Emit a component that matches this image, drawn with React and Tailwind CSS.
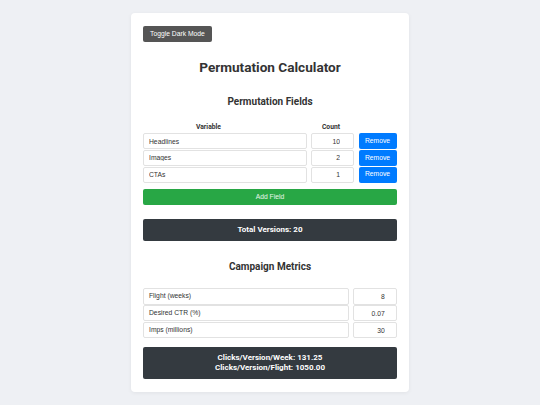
import React, { useState } from 'react';

const heading = { fontFamily: "Roboto, 'Liberation Sans', sans-serif" };
const body = { fontFamily: "'Liberation Sans', Arial, sans-serif" };

export default function App() {
  const [fields, setFields] = useState([
    { name: 'Headlines', count: 10 },
    { name: 'Images', count: 2 },
    { name: 'CTAs', count: 1 },
  ]);
  const [flight, setFlight] = useState(8);
  const [ctr, setCtr] = useState(0.07);
  const [imps, setImps] = useState(30);

  const total = fields.reduce((acc, f) => acc * (Number(f.count) || 1), 1);
  const perWeek = ((imps * 1000000 * (ctr / 100)) / total / flight).toFixed(2);
  const perFlight = ((imps * 1000000 * (ctr / 100)) / total).toFixed(2);

  const update = (i, key, value) => {
    const next = fields.slice();
    next[i] = { ...next[i], [key]: value };
    setFields(next);
  };

  return (
    <div className="min-h-[405px] w-full bg-[#eef0f4] pt-[13px]" style={body}>
      <div className="mx-auto w-[278px] rounded-[4px] bg-white px-[12px] pt-[13px] pb-[13px] shadow-[0_1px_4px_rgba(0,0,0,0.06)]">
        {/* Toggle */}
        <button className="block h-[16px] rounded-[2px] bg-[#555555] px-[7px] text-[6.75px] leading-none text-white">
          Toggle Dark Mode
        </button>

        <h1 className="mt-[17px] h-[16px] text-center text-[13.6px] font-bold leading-[16px] text-[#333333]" style={heading}>
          Permutation Calculator
        </h1>

        <h2 className="mt-[21px] h-[12px] text-center text-[10px] font-bold leading-[12px] text-[#333333]" style={heading}>
          Permutation Fields
        </h2>

        {/* table header */}
        <div className="mt-[13.7px] flex h-[10px] items-center text-[6.75px] font-bold text-[#333333]" style={heading}>
          <div className="w-[131px] text-center">Variable</div>
          <div className="w-[114px] text-center">Count</div>
        </div>

        <div className="mt-[1.6px] flex flex-col gap-[0.7px]">
          {fields.map((f, i) => (
            <div key={i} className="flex h-[16px] items-center">
              <input
                value={f.name}
                onChange={e => update(i, 'name', e.target.value)}
                className="h-[16px] w-[163.5px] rounded-[2px] border border-[#e2e2e2] px-[5px] text-[6.75px] text-[#333333] outline-none"
              />
              <input
                value={f.count}
                onChange={e => update(i, 'count', e.target.value)}
                className="ml-[4.5px] h-[16px] w-[43px] rounded-[2px] border border-[#e2e2e2] pr-[13px] text-right text-[6.75px] text-[#333333] outline-none"
              />
              <button
                onClick={() => setFields(fields.filter((_, j) => j !== i))}
                className="ml-[4.5px] h-[16px] w-[38px] rounded-[2px] bg-[#007bff] text-[6.75px] leading-none text-white"
              >
                Remove
              </button>
            </div>
          ))}
        </div>

        <button
          onClick={() => setFields([...fields, { name: '', count: 1 }])}
          className="mt-[6.7px] block h-[16px] w-full rounded-[2px] bg-[#28a745] text-[6.75px] leading-none text-white/90"
        >
          Add Field
        </button>

        <div className="mt-[14px] flex h-[22px] items-center justify-center rounded-[2px] bg-[#343a40] text-[8px] font-bold text-white" style={heading}>
          Total Versions: {total}
        </div>

        <h2 className="mt-[20px] h-[12px] text-center text-[10px] font-bold leading-[12px] text-[#333333]" style={heading}>
          Campaign Metrics
        </h2>

        <div className="mt-[14.7px] flex flex-col gap-[0.4px]">
          {[
            ['Flight (weeks)', flight, setFlight],
            ['Desired CTR (%)', ctr, setCtr],
            ['Imps (millions)', imps, setImps],
          ].map(([label, value, set]) => (
            <div key={label} className="flex h-[16.5px] items-center">
              <div className="flex h-[16.5px] w-[206px] items-center rounded-[2px] border border-[#e2e2e2] px-[5px] text-[6.75px] text-[#333333]">
                {label}
              </div>
              <input
                value={value}
                onChange={e => set(Number(e.target.value))}
                className="ml-[4.3px] h-[16.5px] w-[43.4px] rounded-[2px] border border-[#e2e2e2] pr-[11px] text-right text-[6.75px] text-[#333333] outline-none"
              />
            </div>
          ))}
        </div>

        <div className="mt-[8.3px] flex h-[32px] flex-col items-center justify-center rounded-[2px] bg-[#343a40] text-[8px] font-bold leading-[9.7px] text-white" style={heading}>
          <div>Clicks/Version/Week: {perWeek}</div>
          <div>Clicks/Version/Flight: {perFlight}</div>
        </div>
      </div>
    </div>
  );
}
